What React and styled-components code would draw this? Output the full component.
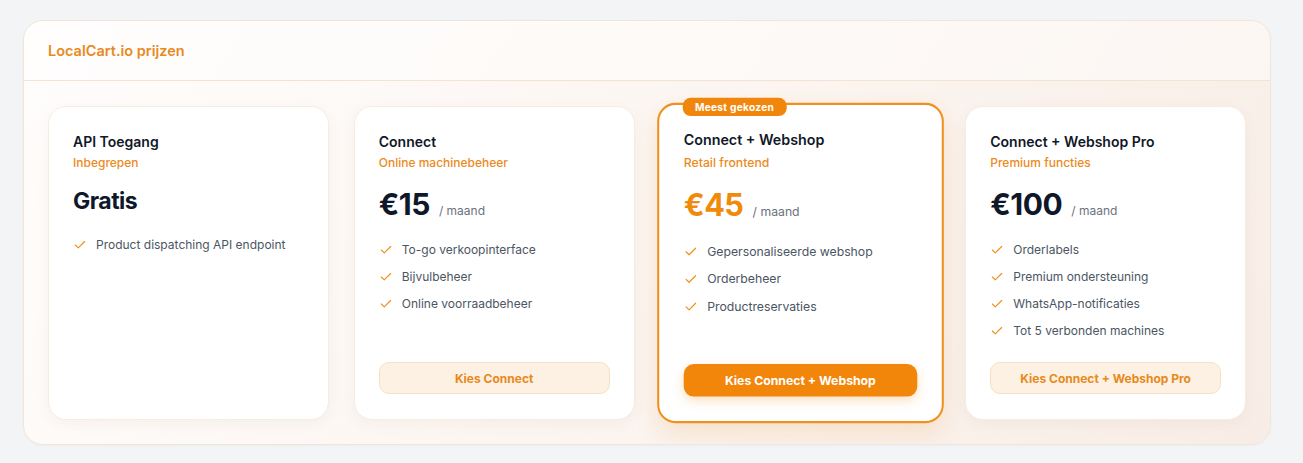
import React from "react";
import styled, { createGlobalStyle } from "styled-components";
import { Check } from "lucide-react";

const GlobalStyle = createGlobalStyle`
  * { box-sizing: border-box; }
  body {
    margin: 0;
    background: #f3f4f6;
    font-family: Inter, "Noto Sans", "Liberation Sans", sans-serif;
    -webkit-font-smoothing: antialiased;
  }
`;

const Page = styled.div`
  padding: 20px 32px 19px 23px;
`;

const Panel = styled.section`
  width: 1248px;
  border-radius: 20px;
  border: 1px solid #f1e6dc;
  background: linear-gradient(120deg, #fffdfc 0%, #fcf6f2 45%, #f8ede6 100%);
  box-shadow: 0 1px 3px rgba(0, 0, 0, 0.03);
  overflow: hidden;
`;

const Header = styled.header`
  height: 60px;
  display: flex;
  align-items: center;
  padding: 0 24px;
  border-bottom: 1px solid #f4e3d2;
  background: rgba(255, 255, 255, 0.45);
`;

const Title = styled.h2`
  margin: 0;
  font-size: 14.5px;
  font-weight: 600;
  color: #e8891c;
`;

const Grid = styled.div`
  display: grid;
  grid-template-columns: repeat(4, 1fr);
  gap: 25px;
  padding: 25px 24px 24px 24px;
`;

const Card = styled.div`
  position: relative;
  display: flex;
  flex-direction: column;
  padding: ${(p) => (p.$featured ? "24px 24px 24px" : "25px 24px 25px")};
  border-radius: 18px;
  background: #fff;
  border: ${(p) => (p.$featured ? "2px solid #f0901e" : "1px solid #f5ece2")};
  box-shadow: ${(p) =>
    p.$featured
      ? "0 10px 24px rgba(232, 137, 28, 0.16)"
      : "0 4px 14px rgba(120, 80, 40, 0.05)"};
  transform: ${(p) => (p.$featured ? "scale(1.02)" : "none")};
`;

const Badge = styled.span`
  position: absolute;
  top: -7px;
  left: 23px;
  height: 18px;
  padding: 0 12px;
  display: flex;
  align-items: center;
  border-radius: 8px;
  background: #f0870c;
  color: #fff;
  font-size: 10px;
  font-weight: 700;
  letter-spacing: 0.25px;
`;

const Name = styled.h3`
  margin: 0;
  font-size: 14px;
  line-height: 20px;
  font-weight: 600;
  color: #111827;
`;

const Tagline = styled.div`
  margin-top: ${(p) => (p.$featured ? "4px" : "2px")};
  font-size: 12px;
  line-height: 18px;
  font-weight: 500;
  color: #ec8a1c;
`;

const PriceRow = styled.div`
  margin-top: 13px;
  display: flex;
  align-items: baseline;
  gap: 9px;
`;

const Amount = styled.span`
  font-size: ${(p) => (p.$small ? "23px" : "30px")};
  line-height: ${(p) => (p.$small ? "33px" : "38px")};
  font-weight: 700;
  letter-spacing: -0.5px;
  color: ${(p) => (p.$accent ? "#f08a0b" : "#0f172a")};
`;

const Per = styled.span`
  font-size: 12px;
  color: #6b7280;
`;

const Features = styled.ul`
  list-style: none;
  margin: 17px 0 22px;
  padding: 0;
  display: flex;
  flex-direction: column;
  gap: 8px;
`;

const Feature = styled.li`
  display: flex;
  align-items: center;
  gap: 9px;
  font-size: 12px;
  line-height: 19px;
  color: #4b5563;

  svg {
    flex-shrink: 0;
    color: #f0901e;
  }
`;

const Button = styled.button`
  margin-top: auto;
  width: 100%;
  height: 32px;
  border-radius: 10px;
  font-family: inherit;
  font-size: 12px;
  font-weight: 700;
  cursor: pointer;
  border: ${(p) => (p.$primary ? "none" : "1px solid #f6dfc4")};
  background: ${(p) => (p.$primary ? "#f2860a" : "#fdf1e4")};
  color: ${(p) => (p.$primary ? "#fff" : "#e8891c")};
  box-shadow: ${(p) =>
    p.$primary ? "0 4px 10px rgba(240, 134, 10, 0.25)" : "none"};
`;

const plans = [
  {
    name: "API Toegang",
    tagline: "Inbegrepen",
    price: "Gratis",
    free: true,
    features: ["Product dispatching API endpoint"],
  },
  {
    name: "Connect",
    tagline: "Online machinebeheer",
    price: "€15",
    features: ["To-go verkoopinterface", "Bijvulbeheer", "Online voorraadbeheer"],
    cta: "Kies Connect",
  },
  {
    name: "Connect + Webshop",
    tagline: "Retail frontend",
    price: "€45",
    featured: true,
    features: ["Gepersonaliseerde webshop", "Orderbeheer", "Productreservaties"],
    cta: "Kies Connect + Webshop",
  },
  {
    name: "Connect + Webshop Pro",
    tagline: "Premium functies",
    price: "€100",
    features: [
      "Orderlabels",
      "Premium ondersteuning",
      "WhatsApp-notificaties",
      "Tot 5 verbonden machines",
    ],
    cta: "Kies Connect + Webshop Pro",
  },
];

function PlanCard({ plan }) {
  return (
    <Card $featured={plan.featured}>
      {plan.featured && <Badge>Meest gekozen</Badge>}
      <Name>{plan.name}</Name>
      <Tagline $featured={plan.featured}>{plan.tagline}</Tagline>
      <PriceRow>
        <Amount $small={plan.free} $accent={plan.featured}>
          {plan.price}
        </Amount>
        {!plan.free && <Per>/ maand</Per>}
      </PriceRow>
      <Features>
        {plan.features.map((f) => (
          <Feature key={f}>
            <Check size={14} strokeWidth={2} />
            {f}
          </Feature>
        ))}
      </Features>
      {plan.cta && <Button $primary={plan.featured}>{plan.cta}</Button>}
    </Card>
  );
}

export default function App() {
  return (
    <Page>
      <GlobalStyle />
      <Panel>
        <Header>
          <Title>LocalCart.io prijzen</Title>
        </Header>
        <Grid>
          {plans.map((p) => (
            <PlanCard key={p.name} plan={p} />
          ))}
        </Grid>
      </Panel>
    </Page>
  );
}
